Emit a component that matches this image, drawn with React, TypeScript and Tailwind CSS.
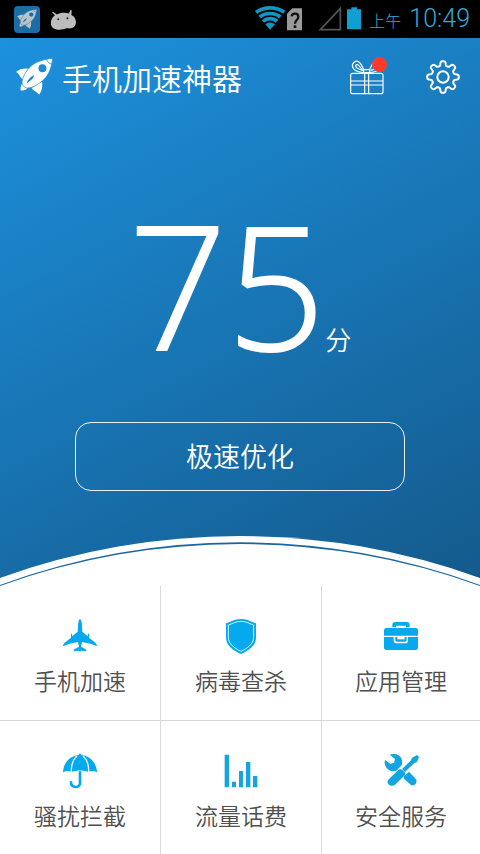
import React from "react";

function RocketIcon({ className, hole }: { className: string; hole: string }) {
  return (
    <svg viewBox="0 0 112 112" className={className} fill="currentColor" aria-hidden="true">
      <path d="M44 34 C30 29 12 32 0 42 C7 44 8 49 14 58 L20 65 C22 56 30 45 44 34Z" />
      <path d="M77 66 C82 80 80 98 70 111 C66 104 62 103 54 98 L47 91 C56 86 68 78 77 66Z" />
      <path d="M22 75 C14 80 14 88 14 98 C22 98 31 98 36 89 C28 88 22 84 22 75Z" />
      <path
        d="M111 1 C85 4 62 10 45 25 C34 36 24 50 20 63 C17 74 18 82 25 88 C33 93 45 91 57 85 C69 78 80 71 89 60 C102 44 108 26 111 1Z"
        stroke={hole}
        strokeWidth="2"
      />
      <circle cx="80" cy="31" r="12" fill={hole} />
      <path d="M92 4 C96 13 101 17 109 19" fill="none" stroke={hole} strokeWidth="2.5" />
      <path d="M32 77 C36 66 43 57 55 51 C54 61 46 69 32 77Z" fill={hole} />
    </svg>
  );
}

function AndroidHead() {
  return (
    <svg viewBox="0 0 80 64" className="h-[21px] w-[27px]" aria-hidden="true">
      <path
        d="M8 8 L20 17 C30 11 44 10 56 14 L61 3 L65 4 L64 18 C76 24 80 36 77 46 C73 60 62 60 48 59 C34 66 16 64 8 58 C0 52 0 38 5 29 C8 24 11 21 14 19 L5 11Z"
        fill="#bdbdbd"
      />
      <circle cx="24" cy="31" r="3" fill="#222" />
      <circle cx="52" cy="28" r="3" fill="#222" />
    </svg>
  );
}

function StatusBar() {
  return (
    <div className="flex h-[38px] items-center justify-between bg-black pr-2.5 pl-3.5">
      <div className="flex items-center gap-2.5">
        <span className="flex h-[27px] w-[26px] items-center justify-center rounded bg-[#1c6da6] text-[#b9c3ca]">
          <RocketIcon className="h-5 w-5" hole="#1c6da6" />
        </span>
        <AndroidHead />
      </div>
      <div className="flex items-center">
        <svg viewBox="0 0 324 78" className="h-[26px] w-[108px]" aria-hidden="true">
          <g fill="none" stroke="#0f96c4" strokeWidth="11">
            <path d="M3 19 C28 1 63 1 88 19" />
            <path d="M14 33 C31 19 59 19 76 33" />
            <path d="M24 46 C37 35 54 35 66 46" />
          </g>
          <path d="M31 55 C40 48 51 48 60 55 L45 71Z" fill="#0f96c4" />
          <path d="M96 23 L112 7 H141 V73 H96Z" fill="#9a9a9a" />
          <path d="M110 31 C111 20 130 20 130 32 C130 42 120 42 120 53" fill="none" stroke="#111" strokeWidth="7" />
          <rect x="116" y="58" width="8" height="8" fill="#111" />
          <path d="M196 71 L256 7 V71Z" fill="none" stroke="#555" strokeWidth="5" />
          <path d="M276 10 H289 V4 H306 V10 H318 V70 H276Z" fill="#0f9fd0" />
        </svg>
        <span className="ml-1.5 flex items-baseline gap-2 text-[#35a8d6]">
          <span className="font-['Noto_Sans_CJK_SC',sans-serif] text-base leading-6 font-light">上午</span>
          <span className="font-[Roboto,sans-serif] text-[25px] leading-7 font-light">10:49</span>
        </span>
      </div>
    </div>
  );
}

function GiftIcon() {
  return (
    <svg viewBox="0 0 102 120" className="h-10 w-[34px]" fill="none" stroke="white" strokeWidth="3.5" aria-hidden="true">
      <rect x="2" y="49" width="97" height="61" rx="6" />
      <path d="M2 72 H99 M2 84 H99 M44 49 V110 M56 49 V110" />
      <path d="M41 47 C27 46 13 42 8 31 C4 19 17 8 27 15 C35 21 38 33 42 39" />
      <path d="M38 40 C29 38 20 34 17 28 C16 22 24 21 28 27 L38 40Z" />
      <path d="M59 47 C73 46 87 42 92 31 C96 19 83 8 73 15 C65 21 62 33 58 39" />
      <path d="M62 40 C71 38 80 34 83 28 M41 38 H59 V47 H41Z" />
    </svg>
  );
}

// Outline of an eight-toothed cog with rounded teeth, centred on (17, 17).
const cogPoints = Array.from({ length: 241 }, (_, i) => {
  const a = (i / 240) * Math.PI * 2;
  const r = 13.6 + 2.3 * Math.tanh(2 * Math.cos(8 * a));
  return `${(17 + r * Math.cos(a)).toFixed(2)},${(17 + r * Math.sin(a)).toFixed(2)}`;
}).join(" ");

function CogIcon() {
  return (
    <svg viewBox="0 0 34 34" className="h-[34px] w-[34px]" fill="none" stroke="white" strokeWidth="2" aria-hidden="true">
      <polygon points={cogPoints} strokeLinejoin="round" />
      <circle cx="17" cy="17" r="5.7" />
    </svg>
  );
}

const iconClass = "h-9 w-9";

function PlaneIcon() {
  return (
    <svg viewBox="126 54 108 108" className={iconClass} fill="#04a9ee" aria-hidden="true">
      <path d="M180 57 C176 60 174 68 174 78 L173 95 L157 109 L156 101 L153 101 L153 113 L133 129 L128 139 L149 131 L174 126 L177 140 L163 148 L160 154 L177 152 L180 155 L183 152 L200 154 L197 148 L183 140 L186 126 L211 131 L232 139 L227 129 L207 113 L207 101 L204 101 L203 109 L187 95 L186 78 C186 68 184 60 180 57Z" />
    </svg>
  );
}

function ShieldIcon() {
  return (
    <svg viewBox="609 54 108 108" className={iconClass} aria-hidden="true">
      <path d="M618 70 C633 66 641 57 663 57 C685 57 693 66 708 70 V113 C708 137 686 151 663 162 C640 151 618 137 618 113Z" fill="#04a9ee" />
      <path d="M625 75 C639 71 646 64 663 64 C680 64 687 71 701 75 V112 C701 132 682 145 663 154 C644 145 625 132 625 112Z" fill="none" stroke="white" strokeWidth="2.5" />
    </svg>
  );
}

function BriefcaseIcon() {
  return (
    <svg viewBox="552 54 108 108" className={iconClass} fill="#04a9ee" aria-hidden="true">
      <path d="M580 82 V75 C580 69 583 66 589 66 H623 C629 66 632 69 632 75 V82 H621 V77 H591 V82Z" />
      <path d="M562 84 H650 Q657 84 657 91 V107 H555 V91 Q555 84 562 84Z" />
      <path d="M555 111 H584 V123 Q584 130 591 130 H620 Q627 130 627 123 V111 H657 V143 Q657 150 650 150 H562 Q555 150 555 143Z" />
      <path d="M589 111 H623 V120 Q623 125 618 125 H594 Q589 125 589 120Z" />
      <rect x="595" y="111" width="22" height="7" fill="white" />
    </svg>
  );
}

function UmbrellaIcon() {
  return (
    <svg viewBox="126 39 108 108" className={iconClass} fill="#04a9ee" aria-hidden="true">
      <path d="M177 45 V41 H183 V45 C210 47 230 68 231 97 C222 92 214 92 206 96 C190 90 170 90 154 96 C146 92 138 92 129 97 C130 68 150 47 177 45Z" />
      <path d="M171 47 C159 58 153 75 154 97 M189 47 C201 58 207 75 206 97" fill="none" stroke="white" strokeWidth="4" />
      <path d="M180 97 V130 C180 145 153 145 153 127" fill="none" stroke="#04a9ee" strokeWidth="8" strokeLinecap="round" />
    </svg>
  );
}

function BarsIcon() {
  return (
    <svg viewBox="609 39 108 108" className={iconClass} fill="#14a5e0" aria-hidden="true">
      <rect x="614" y="44" width="13" height="98" rx="1" />
      <rect x="636" y="125" width="12" height="17" rx="1" />
      <rect x="657" y="93" width="12" height="49" rx="1" />
      <rect x="678" y="66" width="13" height="76" rx="1" />
      <rect x="699" y="108" width="13" height="34" rx="1" />
    </svg>
  );
}

function ToolsIcon() {
  return (
    <svg viewBox="552 39 108 108" className={iconClass} fill="#14a5e0" aria-hidden="true">
      <path d="M572 44 C586 38 604 44 608 57 C610 65 610 69 608 76 L600 84 L591 93 C577 95 564 90 559 77 C556 70 556 65 559 60 L574 72 L585 68 L588 57Z" />
      <path d="M615 108 L630 95 L651 118 C657 127 645 142 635 134 L615 116Z" />
      <path d="M654 45 L660 51 L654 66 L645 70 L618 96 L609 87 L635 62 L639 53Z" />
      <path d="M597 91 Q604 85 611 91 L617 96 Q621 102 616 107 L588 134 C577 144 559 130 568 119Z" />
    </svg>
  );
}

const tools = [
  { label: "手机加速", Icon: PlaneIcon, cell: "border-r border-b" },
  { label: "病毒查杀", Icon: ShieldIcon, cell: "border-r border-b" },
  { label: "应用管理", Icon: BriefcaseIcon, cell: "border-b" },
  { label: "骚扰拦截", Icon: UmbrellaIcon, cell: "border-r" },
  { label: "流量话费", Icon: BarsIcon, cell: "border-r" },
  { label: "安全服务", Icon: ToolsIcon, cell: "" },
];

export default function App() {
  return (
    <div className="flex min-h-screen flex-col bg-white font-['Noto_Sans_CJK_SC',sans-serif]">
      <StatusBar />
      <main className="flex flex-1 flex-col">
        <section className="flex flex-col items-center bg-linear-[152deg] from-[#1d91dd] to-[#145a8c] text-white">
          <header className="flex h-[77px] w-full items-center justify-between pr-5 pl-4">
            <div className="flex items-center gap-[9px]">
              <RocketIcon className="h-[37px] w-[37px]" hole="#1d8bd6" />
              <h1 className="text-[30px] leading-10 font-[350]">手机加速神器</h1>
            </div>
            <div className="flex items-center gap-[42px]">
              <button type="button" aria-label="礼物" className="relative">
                <GiftIcon />
                <span className="absolute top-0 -right-[3px] size-[15px] rounded-full bg-[#ff3b30]" />
              </button>
              <button type="button" aria-label="设置">
                <CogIcon />
              </button>
            </div>
          </header>
          <p className="mt-[82px] flex items-baseline leading-none">
            <span className="font-['Open_Sans',sans-serif] text-[172px] font-light [-webkit-text-stroke:2px_white]">75</span>
            <span className="text-[26px] font-[350]">分</span>
          </p>
          <button type="button" className="mt-[53px] h-[69px] w-11/16 rounded-2xl border border-white/90 text-[27px] font-[350]">
            极速优化
          </button>
          <svg viewBox="0 0 480 50" className="mt-[45px] block w-full" aria-hidden="true">
            <path d="M0 42 A707 707 0 0 1 480 42 V50 H0Z" fill="white" />
            <path d="M0 49 A696 696 0 0 1 480 49 V50 A707 707 0 0 0 0 50Z" fill="#1766a0" />
          </svg>
        </section>
        <nav className="grid flex-1 grid-cols-[161fr_161fr_158fr] grid-rows-[135fr_133fr]">
          {tools.map(({ label, Icon, cell }) => (
            <button
              key={label}
              type="button"
              className={`flex flex-col items-center gap-3 border-[#d9d9d9] pt-8 text-[23px] leading-7 font-[350] text-[#505050] ${cell}`}
            >
              <Icon />
              <span>{label}</span>
            </button>
          ))}
        </nav>
      </main>
    </div>
  );
}
